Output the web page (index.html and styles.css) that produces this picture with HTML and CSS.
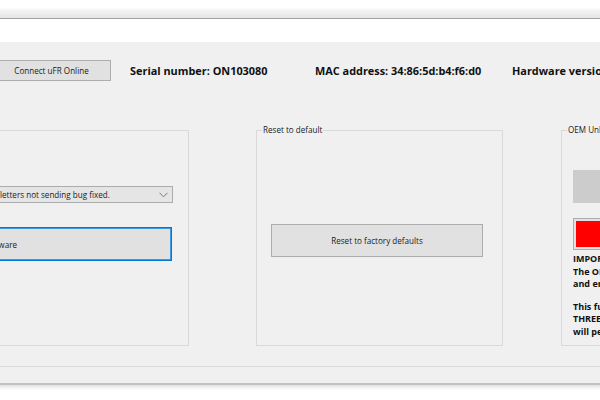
FILE: index.html
```html
<!DOCTYPE html>
<html>
<head>
<meta charset="utf-8">
<link rel="stylesheet" href="styles.css">
</head>
<body>
<div class="titlebar"></div>
<div class="strip"></div>
<div class="panel">
  <div class="header">
    <button class="btn connect">Connect uFR Online</button>
    <span class="info serial">Serial number: ON103080</span>
    <span class="info mac">MAC address: 34:86:5d:b4:f6:d0</span>
    <span class="info hw">Hardware version: 1.2</span>
  </div>
  <div class="groups">
    <fieldset class="group g-left">
      <legend>Firmware update</legend>
      <div class="combo">
        <span class="combo-text">letters not sending bug fixed.</span>
        <svg class="chev" width="9" height="6" viewBox="0 0 9 6"><path d="M0.5 0.8 L4.5 4.8 L8.5 0.8" fill="none" stroke="#7a7a7a" stroke-width="1"/></svg>
      </div>
      <button class="btn fw">Update firmware</button>
    </fieldset>
    <fieldset class="group g-mid">
      <legend>Reset to default</legend>
      <button class="btn reset">Reset to factory defaults</button>
    </fieldset>
    <fieldset class="group g-right">
      <legend>OEM Unlock</legend>
      <div class="oem-box"></div>
      <button class="btn red-btn"><span class="red-fill"></span></button>
      <div class="oem-text">
        <p>IMPORTANT!<br>The OEM unlock code is entered<br>and entered only once.</p>
        <p>This function can be used only<br>THREE times, after that the reader<br>will permanently lock.</p>
      </div>
    </fieldset>
  </div>
  <div class="sep"></div>
</div>
<div class="shadow"></div>
</body>
</html>
```
FILE: styles.css
```css
html, body {
  margin: 0;
  padding: 0;
  background: #ffffff;
  width: 600px;
  height: 400px;
  overflow: hidden;
}
body {
  font-family: "Open Sans", "Liberation Sans", sans-serif;
}
.titlebar {
  height: 18px;
  background: linear-gradient(#ffffff 0, #ffffff 8px, #f4f4f4 10px, #e4e4e4 18px);
  border-bottom: 1px solid #a3a3a3;
}
.strip {
  height: 23px;
  background: #ffffff;
}
.panel {
  height: 341px;
  background: #f0f0f0;
  border-bottom: 2px solid #c2c2c2;
  overflow: hidden;
}
.shadow {
  height: 5px;
  background: linear-gradient(#e2e2e2, #ffffff);
}
.header {
  display: flex;
  align-items: center;
  height: 20px;
  margin-top: 18px;
  white-space: nowrap;
}
.btn {
  box-sizing: border-box;
  margin: 0;
  padding: 0;
  background: #e1e1e1;
  border: 1px solid #adadad;
  font-family: "Open Sans", "Liberation Sans", sans-serif;
  font-size: 8.1px;
  color: #1a1a1a;
  display: flex;
  align-items: center;
  justify-content: center;
}
.connect {
  margin-left: -8px;
  width: 119px;
  height: 21px;
  flex: none;
}
.info {
  flex: none;
  font-weight: 700;
  font-size: 10.9px;
  color: #111111;
}
.serial {
  margin-left: 19px;
  width: 185px;
}
.mac {
  width: 197px;
}
.groups {
  display: flex;
  align-items: flex-start;
  margin-top: 44px;
}
.group {
  box-sizing: border-box;
  flex: none;
  margin: 0;
  padding: 0;
  border: 1px solid #d9d9d9;
  height: 222px;
  display: flex;
  flex-direction: column;
  align-items: flex-start;
  min-width: 0;
}
.group legend {
  margin-left: 5px;
  padding: 0 1px;
  font-size: 8.1px;
  line-height: 12px;
  color: #1a1a1a;
}
.g-left {
  margin-left: -212px;
  width: 401px;
}
.g-mid {
  margin-left: 67px;
  width: 247px;
}
.g-right {
  margin-left: 58px;
  width: 220px;
}
.combo {
  box-sizing: border-box;
  margin: 50px 0 0 20px;
  width: 364px;
  height: 17px;
  background: #e5e5e5;
  border: 1px solid #acacac;
  padding-left: 190px;
  padding-right: 4px;
  display: flex;
  align-items: center;
  justify-content: space-between;
  font-size: 8.1px;
  color: #1a1a1a;
  white-space: nowrap;
}
.chev {
  flex: none;
}
.fw {
  margin: 24px 0 0 20px;
  width: 363px;
  height: 34px;
  justify-content: flex-end;
  padding-right: 154px;
  border: 1px solid #0078d7;
  box-shadow: inset 0 0 0 1px #3d99e0;
}
.reset {
  margin: 88px 0 0 14px;
  width: 212px;
  height: 33px;
}
.oem-box {
  margin: 34px 0 0 11px;
  width: 200px;
  height: 33px;
  background: #cccccc;
  flex: none;
}
.red-btn {
  margin: 15px 0 0 11px;
  width: 200px;
  height: 32px;
  border: 1px solid #adadad;
  padding: 2px;
  background: #e1e1e1;
  align-items: stretch;
  flex: none;
}
.red-fill {
  display: block;
  flex: 1;
  background: #ff0000;
}
.oem-text {
  margin: 3px 0 0 11px;
  font-weight: 700;
  font-size: 9px;
  line-height: 12.5px;
  color: #111111;
  white-space: nowrap;
}
.oem-text p {
  margin: 0 0 10px 0;
}
.sep {
  margin-top: 20px;
  height: 1px;
  background: #dadada;
}
```
